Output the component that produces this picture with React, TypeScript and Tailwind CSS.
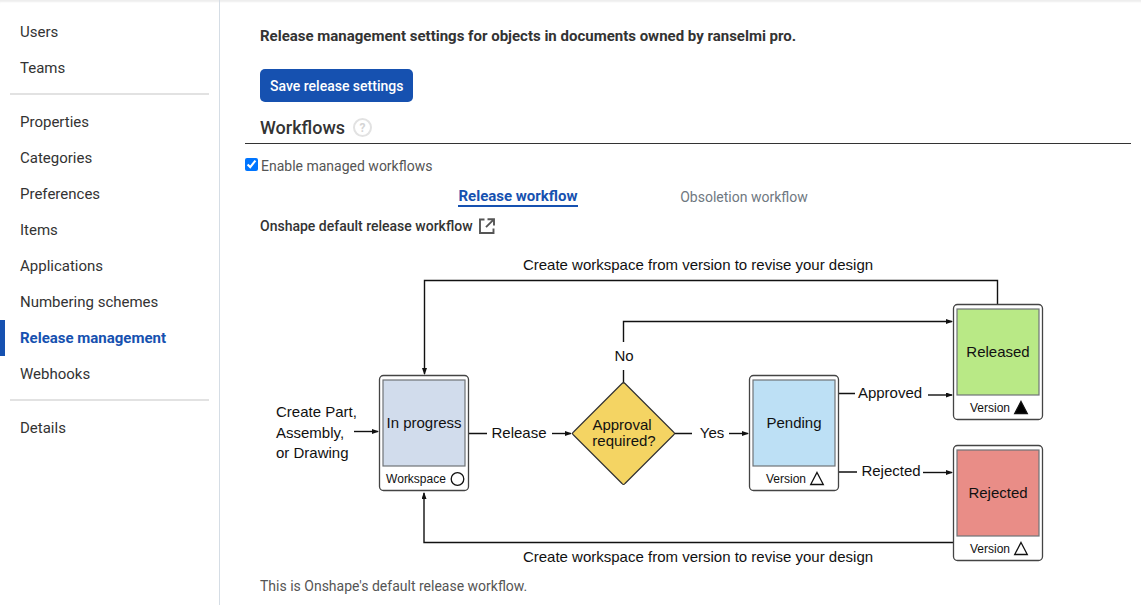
import React from "react";

const navGroups: string[][] = [
  ["Users", "Teams"],
  [
    "Properties",
    "Categories",
    "Preferences",
    "Items",
    "Applications",
    "Numbering schemes",
    "Release management",
    "Webhooks",
  ],
  ["Details"],
];

const ACTIVE = "Release management";

function Sidebar() {
  return (
    <nav className="w-[220px] shrink-0 border-r border-[#d5dde5] pt-[14px]" aria-label="Settings">
      {navGroups.map((group, i) => (
        <React.Fragment key={group[0]}>
          {i > 0 && <hr className="mx-[10px] mt-[7px] mb-[9px] border-t-2 border-[#e2e2e2]" />}
          <ul>
            {group.map((item) => (
              <li key={item}>
                <a
                  href="#"
                  aria-current={item === ACTIVE ? "page" : undefined}
                  className={
                    item === ACTIVE
                      ? "flex h-9 items-center border-l-[5px] border-[#1651b0] pl-[15px] text-[15px] font-bold text-[#1651b0]"
                      : "flex h-9 items-center pl-5 text-[15px] text-[#333333]"
                  }
                >
                  {item}
                </a>
              </li>
            ))}
          </ul>
        </React.Fragment>
      ))}
    </nav>
  );
}

function Arrow({ d }: { d: string }) {
  return <path d={d} fill="none" stroke="#111" strokeWidth="1.4" markerEnd="url(#head)" />;
}

type StateProps = {
  x: number;
  y: number;
  fill: string;
  name: string;
  kind: string;
  mark: "circle" | "triangle" | "solid";
};

function StateBox({ x, y, fill, name, kind, mark }: StateProps) {
  return (
    <g transform={`translate(${x} ${y})`}>
      <rect x="0.5" y="0.5" width="89" height="115" rx="4" fill="#fff" stroke="#444" strokeWidth="1.3" />
      <rect x="4" y="5" width="82" height="86" fill={fill} stroke="#6f7377" strokeWidth="1.2" />
      <text x="45" y="53" fontSize="15" textAnchor="middle">
        {name}
      </text>
      <text x="37" y="108" fontSize="12" textAnchor="middle">
        {kind}
      </text>
      {mark === "circle" ? (
        <circle cx="78.5" cy="104" r="6.3" fill="none" stroke="#111" strokeWidth="1.3" />
      ) : (
        <path
          d="M68 97.5L74.3 109.5H61.7Z"
          fill={mark === "solid" ? "#000" : "none"}
          stroke="#111"
          strokeWidth="1.3"
        />
      )}
    </g>
  );
}

function WorkflowDiagram() {
  return (
    <svg
      className="block w-[784px] max-w-none"
      viewBox="260 250 784 320"
      role="img"
      aria-label="Release workflow diagram"
      fontFamily='"Liberation Sans", Arial, sans-serif'
      fill="#111"
    >
      <defs>
        <marker
          id="head"
          markerUnits="userSpaceOnUse"
          markerWidth="8"
          markerHeight="6"
          refX="6"
          refY="2.5"
          orient="auto"
        >
          <path d="M0 0L7 2.5L0 5Z" fill="#111" />
        </marker>
      </defs>

      <Arrow d="M997.5 304V280.5H424.5V374" />
      <Arrow d="M953 542.5H424V493" />
      <Arrow d="M354 431.5H378" />
      <path d="M469 433.5H487M675 433.5H692M839 393.5H855M839 472H857M623.5 383V370" stroke="#111" strokeWidth="1.4" />
      <Arrow d="M552 433.5H571" />
      <Arrow d="M623.5 342V321.5H952" />
      <Arrow d="M729 433.5H748" />
      <Arrow d="M928 395H952" />
      <Arrow d="M923 472.5H952" />

      <path
        d="M622 383.5Q623.5 382 625 383.5L673.5 432Q675.5 433.5 673.5 435L625 483.5Q623.5 485.5 622 483.5L573.5 435Q571.5 433.5 573.5 432Z"
        fill="#f4d463"
        stroke="#333"
        strokeWidth="1.2"
      />

      <StateBox x={379} y={375} fill="#d1dcec" name="In progress" kind="Workspace" mark="circle" />
      <StateBox x={749} y={375} fill="#bde0f5" name="Pending" kind="Version" mark="triangle" />
      <StateBox x={953} y={304} fill="#b9e986" name="Released" kind="Version" mark="solid" />
      <StateBox x={953} y={445} fill="#e98d87" name="Rejected" kind="Version" mark="triangle" />

      <g fontSize="15">
        <text x="698" y="270" textAnchor="middle">
          Create workspace from version to revise your design
        </text>
        <text x="698" y="562" textAnchor="middle">
          Create workspace from version to revise your design
        </text>
        <text x="276" y="417">Create Part,</text>
        <text x="276" y="438">Assembly,</text>
        <text x="276" y="458">or Drawing</text>
        <text x="519" y="438" textAnchor="middle">Release</text>
        <text x="624" y="361" textAnchor="middle">No</text>
        <text x="622" y="430" textAnchor="middle">Approval</text>
        <text x="624" y="446" textAnchor="middle">required?</text>
        <text x="712" y="438" textAnchor="middle">Yes</text>
        <text x="890" y="398" textAnchor="middle">Approved</text>
        <text x="891" y="476" textAnchor="middle">Rejected</text>
      </g>
    </svg>
  );
}

function ExternalIcon() {
  return (
    <svg width="16" height="16" viewBox="0 0 16 16" fill="none" stroke="#555" strokeWidth="1.9" aria-hidden="true">
      <path d="M5.5 1.5H1V15H14.5V10.5M8.5 1.2H15V7.5M14.6 1.6L7 9.2" />
    </svg>
  );
}

export default function App() {
  return (
    <div className="flex min-h-screen bg-white font-['Roboto',sans-serif] text-[#333333] shadow-[inset_0_3px_2px_-1px_#eeeeee]">
      <Sidebar />
      <main className="min-w-0 flex-1 pr-[10px] pl-[25px]">
        <h1 className="mt-6 pl-[15px] text-[15px] leading-6 font-bold">
          Release management settings for objects in documents owned by ranselmi pro.
        </h1>
        <div className="mt-[21px] pl-[15px]">
          <button
            type="button"
            className="h-[33px] rounded-[5px] bg-[#1651b0] px-[10px] pt-px text-sm font-medium text-white"
          >
            Save release settings
          </button>
        </div>
        <div className="mt-[10px] flex h-8 items-center gap-2 border-b border-[#333333] pl-[15px]">
          <h2 className="text-lg font-medium">Workflows</h2>
          <button
            type="button"
            aria-label="Help"
            className="flex size-[19px] items-center justify-center rounded-full border-2 border-[#e2e2e2] text-xs font-bold text-[#d5d5d5]"
          >
            ?
          </button>
        </div>
        <label className="mt-3 flex h-5 w-fit items-center gap-[3px] text-sm text-[#555555]">
          <input type="checkbox" defaultChecked className="mb-1 size-[13px]" />
          Enable managed workflows
        </label>
        <div className="mt-[11px] flex pl-40" role="tablist">
          <div className="flex w-[226px] justify-center">
            <button
              type="button"
              role="tab"
              aria-selected="true"
              className="h-5 border-b-2 border-[#1651b0] text-[15px] leading-[18px] font-bold text-[#1651b0]"
            >
              Release workflow
            </button>
          </div>
          <div className="flex w-[226px] justify-center">
            <button
              type="button"
              role="tab"
              aria-selected="false"
              className="h-5 text-sm leading-[18px] text-[#6f7881]"
            >
              Obsoletion workflow
            </button>
          </div>
        </div>
        <div className="mt-[7px] flex h-6 items-center gap-[6px] pl-[15px] text-sm font-medium">
          <span>Onshape default release workflow</span>
          <a href="#" aria-label="Open workflow in a new tab">
            <ExternalIcon />
          </a>
        </div>
        <div className="mt-3 pl-[15px]">
          <WorkflowDiagram />
          <p className="mt-[6px] text-sm leading-5 text-[#555555]">This is Onshape's default release workflow.</p>
        </div>
      </main>
    </div>
  );
}
